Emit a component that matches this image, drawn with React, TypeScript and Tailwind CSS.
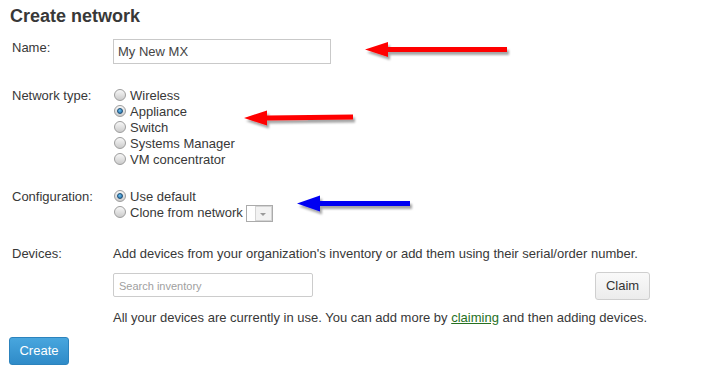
import React from "react";

function Radio({ checked }: { checked?: boolean }) {
  return (
    <span className="mt-px flex h-3 w-3 shrink-0 items-center justify-center rounded-full border border-[#9d9d9d] bg-[linear-gradient(180deg,#f7f7f7,#cbcbcb)]">
      {checked && (
        <span className="h-[6px] w-[6px] rounded-full border border-[#1d4d75] bg-[radial-gradient(circle_at_40%_35%,#6cc0f0,#1f6aa3)]" />
      )}
    </span>
  );
}

function RadioRow({ label, checked, children }: { label: string; checked?: boolean; children?: React.ReactNode }) {
  return (
    <div className="flex h-4 items-start gap-[4px] pl-px leading-4">
      <Radio checked={checked} />
      <span>{label}</span>
      {children}
    </div>
  );
}

export default function App() {
  return (
    <div className="relative h-[375px] w-[705px] overflow-hidden bg-white font-['Liberation_Sans',Arial,sans-serif] text-[13px] text-[#383838]">
      <h1 className="pl-[10px] pt-[5px] text-[18px] font-bold leading-[22px] text-[#383838]">Create network</h1>

      <div className="mt-[12px] flex">
        <div className="w-[113px] pl-[12px] pt-px leading-4">Name:</div>
        <input
          readOnly
          defaultValue="My New MX"
          className="h-[25px] w-[218px] border border-[#c9c9c9] bg-white pl-[4px] text-[13px] text-[#444] outline-none"
        />
      </div>

      <div className="mt-[24px] flex">
        <div className="w-[113px] pl-[12px] leading-4">Network type:</div>
        <div className="flex flex-col">
          <RadioRow label="Wireless" />
          <RadioRow label="Appliance" checked />
          <RadioRow label="Switch" />
          <RadioRow label="Systems Manager" />
          <RadioRow label="VM concentrator" />
        </div>
      </div>

      <div className="mt-[21px] flex">
        <div className="w-[113px] pl-[12px] leading-4">Configuration:</div>
        <div className="flex flex-col">
          <RadioRow label="Use default" checked />
          <RadioRow label="Clone from network">
            <span className="-ml-px flex h-[17px] w-[27px] shrink-0 border border-[#ababab] bg-white">
              <span className="w-[8px]" />
              <span className="flex flex-1 items-center justify-center border border-[#d4d4d4] bg-[#f2f2f2]">
                <span className="mt-px h-0 w-0 border-x-[3px] border-t-[3px] border-x-transparent border-t-[#9a9a9a]" />
              </span>
            </span>
          </RadioRow>
        </div>
      </div>

      <div className="mt-[25px] flex">
        <div className="w-[113px] pl-[12px] leading-4">Devices:</div>
        <div className="flex w-[537px] flex-col">
          <div className="leading-4">Add devices from your organization's inventory or add them using their serial/order number.</div>
          <div className="mt-[10px] flex items-start justify-between">
            <input
              readOnly
              placeholder="Search inventory"
              className="mt-px h-[24px] w-[200px] rounded-[2px] border border-[#cccccc] bg-white pl-[5px] pt-[2px] text-[11px] text-[#555] outline-none placeholder:text-[#a0a0a0]"
            />
            <button className="h-[28px] w-[55px] rounded-[3px] border border-[#cfcfcf] bg-[linear-gradient(180deg,#f9f9f9,#ececec)] text-[13px] text-[#333]">
              Claim
            </button>
          </div>
          <div className="mt-[10px] leading-4">
            All your devices are currently in use. You can add more by{" "}
            <span className="text-[#26701f] underline decoration-[#26701f]">claiming</span> and then adding devices.
          </div>
        </div>
      </div>

      <div className="mt-[11px] pl-[9px]">
        <button className="h-[28px] w-[60px] rounded-[3px] border border-[#2c83bd] bg-[linear-gradient(180deg,#48a6de,#2f8bc8)] text-[13px] text-white">
          Create
        </button>
      </div>

      <svg className="pointer-events-none absolute left-0 top-0" width="705" height="375">
        <defs>
          <filter id="sh" x="-20%" y="-100%" width="140%" height="300%">
            <feDropShadow dx="2" dy="3" stdDeviation="1.3" floodColor="#000" floodOpacity="0.35" />
          </filter>
        </defs>
        <g filter="url(#sh)">
          <polygon fill="#ff0000" points="365,49.5 388,42 388,47 507,47 507,52 388,52 388,57" />
          <polygon fill="#ff0000" points="244,118 267,110.5 267,115.5 353,114.5 353,119.5 267,120.5 267,125.5" />
          <polygon fill="#0000f2" points="297,203.5 320,195.5 320,201 410,201 410,206 320,206 320,211.5" />
        </g>
      </svg>
    </div>
  );
}
